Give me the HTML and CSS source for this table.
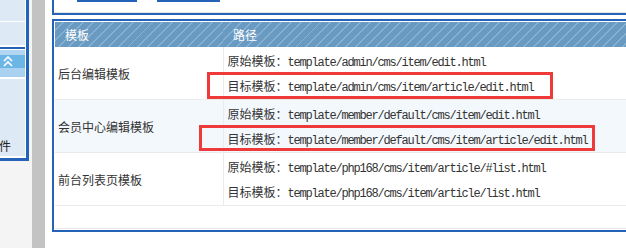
FILE: index.html
```html
<!DOCTYPE html>
<html lang="zh-CN">
<head>
    <meta charset="UTF-8">
    <title>模板设置</title>
    <link rel="stylesheet" href="styles.css">
</head>
<body>
    <div class="frame">
        <!-- left menu frame, scrolled to the right -->
        <div class="side">
            <div class="side-box">
                <div class="side-top">
                    <div class="side-row"></div>
                    <div class="side-row tall"></div>
                </div>
                <div class="side-menu">
                    <div class="menu-head">
                        <svg width="10" height="11" viewBox="0 0 10 11">
                            <polyline points="1,5 5,1 9,5" fill="none" stroke="#fff" stroke-width="1.6"/>
                            <polyline points="1,10 5,6 9,10" fill="none" stroke="#fff" stroke-width="1.6"/>
                        </svg>
                    </div>
                    <div class="menu-body">
                        <div class="menu-item">附件</div>
                    </div>
                </div>
            </div>
        </div>
        <div class="splitter"></div>

        <div class="content">
            <div class="toolbar">
                <span class="tab"></span>
                <span class="tab wide"></span>
            </div>

            <div class="panel">
                <table class="tpl-table">
                    <thead>
                        <tr>
                            <th class="col-name">模板</th>
                            <th>路径</th>
                        </tr>
                    </thead>
                    <tbody>
                        <tr>
                            <td class="col-name">后台编辑模板</td>
                            <td>
                                <div class="path">原始模板：<code>template/admin/cms/item/edit.html</code></div>
                                <div class="path">目标模板：<code>template/admin/cms/item/article/edit.html</code></div>
                            </td>
                        </tr>
                        <tr class="alt">
                            <td class="col-name">会员中心编辑模板</td>
                            <td>
                                <div class="path">原始模板：<code>template/member/default/cms/item/edit.html</code></div>
                                <div class="path">目标模板：<code>template/member/default/cms/item/article/edit.html</code></div>
                            </td>
                        </tr>
                        <tr>
                            <td class="col-name">前台列表页模板</td>
                            <td>
                                <div class="path">原始模板：<code>template/php168/cms/item/article/#list.html</code></div>
                                <div class="path">目标模板：<code>template/php168/cms/item/article/list.html</code></div>
                            </td>
                        </tr>
                    </tbody>
                </table>
                <div class="panel-foot"></div>
            </div>
        </div>
    </div>

    <!-- highlight boxes over the target paths -->
    <div class="mark mark-admin"></div>
    <div class="mark mark-member"></div>
</body>
</html>
```

FILE: styles.css
```css
:root {
    --blue: #2563b8;
    --line: #ebebeb;
    --side-bg: #dde9f5;
    --text: #333333;
}
html, body {
    margin: 0;
    height: 100%;
    overflow: hidden;
}
body {
    position: relative;
    font-family: "Noto Sans CJK SC", "Noto Sans", sans-serif;
    font-size: 12px;
    color: var(--text);
    background: #fff;
}
.frame {
    display: flex;
    height: 248px;
}

/* left frame */
.side {
    width: 32px;
    flex: none;
    background: #f4f4f4;
    overflow: hidden;
}
.side-box {
    width: 29px;
    box-sizing: border-box;
    background: #fff;
    border-right: 3px solid var(--blue);
    border-bottom: 3px solid var(--blue);
    padding-right: 1px;
}
.side-top {
    padding-bottom: 2px;
    border-bottom: 2px solid var(--blue);
}
.side-row {
    height: 21px;
    background: var(--side-bg);
    border-bottom: 1px solid #fff;
}
.side-row.tall {
    height: 23px;
    border-bottom: none;
}
.side-menu {
    padding: 1px 0 2px;
}
.menu-head {
    height: 29px;
    background: linear-gradient(#b2d6f2 0 5px, #6cb6e6 5px 18px, #a9d1f0 18px);
    border-bottom: 2px solid #fff;
    padding: 6px 0 0 3px;
    box-sizing: border-box;
}
.menu-head svg {
    display: block;
}
.menu-body {
    height: 77px;
    background: var(--side-bg);
    padding-top: 57px;
    box-sizing: border-box;
}
.menu-item {
    line-height: 20px;
    font-size: 12px;
    color: #222;
    white-space: nowrap;
    text-indent: -13px;
}
.splitter {
    width: 13px;
    flex: none;
    background: #c3c3c3;
}

/* main frame */
.content {
    flex: 1;
    padding-left: 7px;
    overflow: hidden;
}
.toolbar {
    display: flex;
    gap: 20px;
    height: 13px;
    padding-left: 23px;
    border-left: 2px solid var(--blue);
    border-bottom: 2px solid var(--blue);
    box-shadow: inset 0 -1px #e4e4e4;
}
.tab {
    width: 60px;
    height: 0;
    border-bottom: 2px solid var(--blue);
}
.tab.wide {
    width: 63px;
}
.panel {
    width: 620px;
    margin-top: 4px;
    padding: 1px;
    border: 2px solid var(--blue);
}
.tpl-table {
    width: 100%;
    border-collapse: collapse;
    table-layout: fixed;
}
.tpl-table th {
    height: 25px;
    padding: 0 0 0 10px;
    text-align: left;
    font-weight: normal;
    color: #fff;
    background-color: #699ac1;
    background-image: repeating-linear-gradient(135deg, #699ac1 0 5.6px, #87b0d1 5.6px 7px);
}
.tpl-table th.col-name {
    width: 158px;
}
.tpl-table td {
    height: 50px;
    padding: 1px 4px;
    border-bottom: 1px solid var(--line);
    vertical-align: middle;
    white-space: nowrap;
}
.tpl-table td.col-name {
    padding-left: 3px;
    border-right: 1px solid var(--line);
}
.tpl-table tr.alt td {
    background: #f3f8fd;
}
.path {
    height: 25px;
    line-height: 25px;
    overflow: hidden;
}
.path code {
    font-family: "Liberation Mono", monospace;
    font-size: 12px;
    line-height: 1;
    letter-spacing: -1.2px;
    color: #333;
}
.panel-foot {
    height: 22px;
    border-bottom: 1px solid var(--line);
}

.mark {
    position: absolute;
    box-sizing: border-box;
    border: 3px solid #f03a3a;
}
.mark-admin {
    left: 207px;
    top: 72px;
    width: 346px;
    height: 27px;
}
.mark-member {
    left: 199px;
    top: 125px;
    width: 396px;
    height: 26px;
}
```
